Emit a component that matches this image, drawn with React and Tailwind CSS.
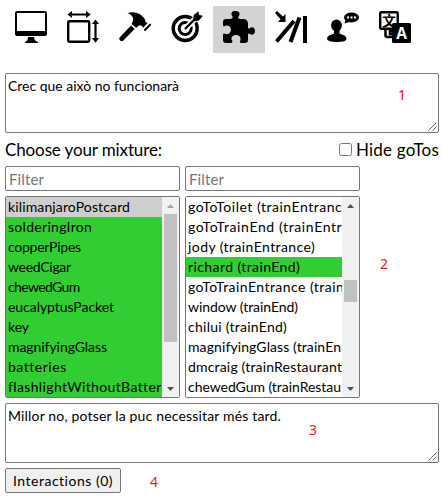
import { useLayoutEffect, useRef } from "react";

const comic = "font-['Comic_Sans_MS','Lato',sans-serif]";

// Spreads a line of text over a given width by adjusting its letter spacing.
function Line({ text, width, className = "" }) {
  const ref = useRef(null);
  useLayoutEffect(() => {
    const el = ref.current;
    el.style.letterSpacing = "0px";
    const natural = el.getBoundingClientRect().width;
    el.style.letterSpacing = `${(width - natural) / (text.length - 0.5)}px`;
  }, [text, width]);
  return (
    <span ref={ref} className={`inline-block whitespace-pre ${className}`}>
      {text}
    </span>
  );
}

function Icon({ children }) {
  return (
    <svg viewBox="0 0 32 32" className="h-8 w-8" fill="black">
      {children}
    </svg>
  );
}

const tools = [
  {
    name: "screen",
    art: (
      <>
        <path fillRule="evenodd" d="M2 0h28q2 0 2 2v21q0 2-2 2H2q-2 0-2-2V2Q0 0 2 0ZM2 2v18h28V2Z" />
        <path d="M13 26h6q0 4 4 5v1H10v-1q3-1 3-5Z" />
      </>
    ),
  },
  {
    name: "size",
    art: (
      <>
        <rect x="1.200" y="10.200" width="21" height="20.600" rx="1.200" fill="none" stroke="black" strokeWidth="2.400" />
        <path d="M0.500 3.500 5 0v2.500h14V0l4.800 3.500L19 7V4.500H5V7ZM28.500 8.500 32 13h-2.400v14H32l-3.500 4.700L25 27h2.400V13H25Z" />
      </>
    ),
  },
  {
    name: "hammer",
    art: (
      <>
        <path d="M8.500 2C15 0 21 1.500 25.500 7.500l1.200 3.700 2 .8-4.700 4.800-1.200-2-2.600-.5-3 2.600-4.600-4.200q2.600-4.400 1-6.700Q12 3 8.500 2Z" />
        <path d="m12 14.500 3.600 3.400L4.400 29.500q-1.600 1.500-3.300 0-1.600-1.700 0-3.400Z" />
        <path d="m26 19 5.200-5.400" stroke="black" strokeWidth="2" strokeLinecap="round" />
      </>
    ),
  },
  {
    name: "target",
    art: (
      <>
        <circle cx="14.200" cy="17.500" r="12" fill="none" stroke="black" strokeWidth="3.400" />
        <circle cx="14.200" cy="17.500" r="6" fill="none" stroke="black" strokeWidth="3" />
        <path d="m14 18 11-11" stroke="white" strokeWidth="6" />
        <path d="m14 18 12-12" stroke="black" strokeWidth="2.400" />
        <path d="m22 9 .8-5 4.500-3.800.9 3.700 3.700.8L28 9.500l-5 .8Z" />
      </>
    ),
  },
  {
    name: "puzzle",
    art: (
      <path d="M0 8h6q4.500 0 3.500-2.500C7 2 9 0 12.500 0S18 2.500 15.500 5.500C14.500 8 16.500 8 20 8q5 0 5 5v2.500c0 2.500 1 2.500 2 1.500 2.500-2 5 .2 5 3s-2.500 5-5 3c-1-1-2-.8-2 1V29q0 3-3 3h-4q-1.700 0-.8-2.200c1.300-2.800-.8-5.800-4-5.800s-6.200 2.500-4 5.600Q10 32 8 32H3q-3 0-3-3v-5q0-2 2-1.200c3.500 1.500 6-1.300 6-4s-3-5.300-6-3.700Q0 16 0 14v-3q0-3 3-3Z" />
    ),
  },
  {
    name: "fall",
    art: (
      <>
        <path d="M30 5v27M24.500 6.500 15.500 31M19 10 1.500 30.500" stroke="black" strokeWidth="4" />
        <path d="m0 2 2-2 6 5.500 2.500-2.500V11H3l2.500-2.800Z" />
      </>
    ),
  },
  {
    name: "talk",
    art: (
      <>
        <ellipse cx="9.500" cy="14.500" rx="5.400" ry="6" />
        <path d="M7 18h5.500v4.500l5 2q2 1 2 3.500 0 3-9.500 3T0 28q0-2.500 2-3.500l5-2Z" />
        <ellipse cx="24.500" cy="6.500" rx="7.500" ry="5" />
        <path d="m18.500 9-1 3.500 5-1.500Z" />
        <path d="M20 5.500h2v2h-2Zm3.500 0h2v2h-2Zm3.500 0h2v2h-2Z" fill="white" />
      </>
    ),
  },
  {
    name: "language",
    art: (
      <>
        <rect x="1.200" y="1.200" width="17.500" height="16.600" rx="1" fill="white" stroke="black" strokeWidth="2.400" />
        <path d="M6.500 19v5q0 2 2 2h5M13 20h-2v3h2" fill="none" stroke="black" strokeWidth="2.600" />
        <text x="10" y="14.500" textAnchor="middle" fontSize="13.500" fontWeight="700" className="font-['Noto_Sans_CJK_SC',sans-serif]">文</text>
        <rect x="13" y="12" width="19" height="20" rx="1.500" />
        <text x="22.500" y="27.500" textAnchor="middle" fontSize="15.500" fontWeight="700" fill="white" className="font-['Open_Sans',sans-serif]">A</text>
      </>
    ),
  },
];

const items = [
  ["kilimanjaroPostcard", 122],
  ["solderingIron", 84],
  ["copperPipes", 73],
  ["weedCigar", 63],
  ["chewedGum", 72],
  ["eucalyptusPacket", 106],
  ["key", 21],
  ["magnifyingGlass", 99],
  ["batteries", 58],
  ["flashlightWithoutBatter", 153],
];

const places = [
  ["goToToilet (trainEntranc", 154],
  ["goToTrainEnd (trainEntr", 154],
  ["jody (trainEntrance)", 127],
  ["richard (trainEnd)", 112],
  ["goToTrainEntrance (train", 156],
  ["window (trainEnd)", 110],
  ["chilui (trainEnd)", 99],
  ["magnifyingGlass (trainEn", 153],
  ["dmcraig (trainRestaurant", 154],
  ["chewedGum (trainRestau", 153],
];

function Arrow({ down, muted }) {
  return (
    <svg viewBox="0 0 17 17" className="h-[17px] w-[17px] shrink-0" fill={muted ? "#a3a3a3" : "#505050"}>
      <path d={down ? "M5 7h7l-3.500 4Z" : "M5 11h7L8.500 7Z"} />
    </svg>
  );
}

function ListBox({ rows, colour, thumb, atTop }) {
  return (
    <div className="flex h-[202px] w-[175px] overflow-hidden rounded-[2px] border border-[#767676] bg-white">
      <div className="w-[156px] shrink-0 overflow-hidden">
        {rows.map(([text, width], i) => (
          <div key={text} className={`flex h-5 items-center overflow-hidden pl-[2px] ${colour(i)}`}>
            <Line text={text} width={width} className="text-[14px] leading-5" />
          </div>
        ))}
      </div>
      <div className="flex w-[17px] flex-col bg-[#f1f1f1]">
        <Arrow muted={atTop} />
        <div className="flex-1">
          <div className={`mx-[2px] w-[13px] bg-[#c1c1c1] ${thumb}`} />
        </div>
        <Arrow down />
      </div>
    </div>
  );
}

function TextBox({ text, width, mark, markClass }) {
  return (
    <div className="relative flex h-[60px] w-[434px] items-start rounded-[2px] border border-[#767676] bg-white px-[2px] pt-[2px]">
      <Line text={text} width={width} className="text-[14px] leading-5" />
      <span className={`absolute font-['Noto_Sans',sans-serif] text-sm leading-5 ${markClass}`}>{mark}</span>
      <svg viewBox="0 0 9 9" className="absolute right-px bottom-px h-[9px] w-[9px]" stroke="#555" strokeWidth="0.900">
        <path d="M0.500 8.500l8-8M4.500 8.500l4-4" />
      </svg>
    </div>
  );
}

function Filter() {
  return (
    <div className="flex h-[25px] w-[175px] items-center rounded-[2px] border border-[#767676] bg-white pl-[3px] text-[#757575]">
      <Line text="Filter" width={35} className="text-[15px] leading-5" />
    </div>
  );
}

export default function App() {
  return (
    <div className={`h-[499px] w-[442px] overflow-hidden bg-white pt-[6px] pl-[5px] text-black ${comic}`}>
      <div className="flex h-[47px]">
        {tools.map(({ name, art }) => (
          <div key={name} className={`flex w-[52px] justify-center pt-[5px] ${name === "puzzle" ? "bg-[#d3d3d3]" : ""}`}>
            <Icon>{art}</Icon>
          </div>
        ))}
      </div>
      <div className="mt-5">
        <TextBox text="Crec que això no funcionarà" width={171} mark="1" markClass="top-[11px] left-[392px] text-[#ff0037]" />
      </div>
      <div className="flex h-[33px] w-[434px] items-center justify-between">
        <Line text="Choose your mixture:" width={157} className="text-[17px] leading-6" />
        <div className="flex items-center gap-1">
          <span className="h-[13px] w-[13px] rounded-[2.5px] border border-[#767676] bg-white" />
          <Line text="Hide goTos" width={83} className="text-[17px] leading-6" />
        </div>
      </div>
      <div className="flex gap-[5px]">
        <Filter />
        <Filter />
      </div>
      <div className="mt-[5px] flex gap-[5px]">
        <ListBox rows={items} colour={(i) => (i === 0 ? "bg-[#cecece]" : "bg-[#32cd32]")} thumb="h-[128px]" atTop />
        <ListBox rows={places} colour={(i) => (i === 3 ? "bg-[#32cd32]" : "bg-white")} thumb="mt-[66px] h-[22px]" />
        <span className="mt-[58px] ml-[15px] font-['Noto_Sans',sans-serif] text-sm leading-5 text-[#ed1c24]">2</span>
      </div>
      <div className="mt-[5px]">
        <TextBox text="Millor no, potser la puc necessitar més tard." width={273} mark="3" markClass="top-[16px] left-[303px] text-[#ed1c24]" />
      </div>
      <div className="mt-[5px] flex items-center">
        <button className="flex h-[25px] w-[116px] items-center justify-center rounded-[2px] border border-[#767676] bg-[#efefef]">
          <Line text="Interactions (0)" width={100} className="text-[14px] leading-5" />
        </button>
        <span className="ml-[29px] pt-[3px] font-['Noto_Sans',sans-serif] text-sm leading-5 text-[#ed1c24]">4</span>
      </div>
    </div>
  );
}
